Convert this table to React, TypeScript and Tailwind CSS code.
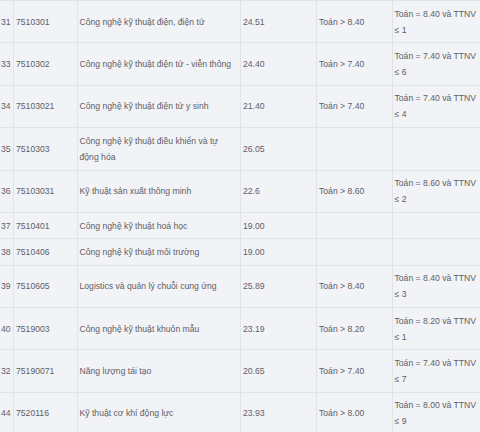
import React from "react";

type Row = { n: string; code: string; name: string; score: string; c1: string; c2: string };

const rows: Row[] = [
  { n: "31", code: "7510301", name: "Công nghệ kỹ thuật điện, điện tử", score: "24.51", c1: "Toán > 8.40", c2: "Toán = 8.40 và TTNV ≤ 1" },
  { n: "33", code: "7510302", name: "Công nghệ kỹ thuật điện tử - viễn thông", score: "24.40", c1: "Toán > 7.40", c2: "Toán = 7.40 và TTNV ≤ 6" },
  { n: "34", code: "75103021", name: "Công nghệ kỹ thuật điện tử y sinh", score: "21.40", c1: "Toán > 7.40", c2: "Toán = 7.40 và TTNV ≤ 4" },
  { n: "35", code: "7510303", name: "Công nghệ kỹ thuật điều khiển và tự động hóa", score: "26.05", c1: "", c2: "" },
  { n: "36", code: "75103031", name: "Kỹ thuật sản xuất thông minh", score: "22.6", c1: "Toán > 8.60", c2: "Toán = 8.60 và TTNV ≤ 2" },
  { n: "37", code: "7510401", name: "Công nghệ kỹ thuật hoá học", score: "19.00", c1: "", c2: "" },
  { n: "38", code: "7510406", name: "Công nghệ kỹ thuật môi trường", score: "19.00", c1: "", c2: "" },
  { n: "39", code: "7510605", name: "Logistics và quản lý chuỗi cung ứng", score: "25.89", c1: "Toán > 8.40", c2: "Toán = 8.40 và TTNV ≤ 3" },
  { n: "40", code: "7519003", name: "Công nghệ kỹ thuật khuôn mẫu", score: "23.19", c1: "Toán > 8.20", c2: "Toán = 8.20 và TTNV ≤ 1" },
  { n: "32", code: "75190071", name: "Năng lượng tái tạo", score: "20.65", c1: "Toán > 7.40", c2: "Toán = 7.40 và TTNV ≤ 7" },
  { n: "44", code: "7520116", name: "Kỹ thuật cơ khí động lực", score: "23.93", c1: "Toán > 8.00", c2: "Toán = 8.00 và TTNV ≤ 9" },
];

const cell = "flex items-center border-r border-b border-[#e2e3e9] py-[4.7px]";

export default function App() {
  return (
    <div
      className="w-[480px] h-[432px] overflow-hidden bg-[#f2f3f7] text-[#5d6066] text-[8.65px] leading-[16px]"
      style={{ fontFamily: '"Liberation Sans", Arial, sans-serif' }}
    >
      <div className="grid grid-cols-[14px_64px_163px_76px_76px_91px] w-[484px] border-t border-[#e2e3e9]">
        {rows.map((r) => (
          <React.Fragment key={r.code}>
            <div className={`${cell} pl-[1px]`}>{r.n}</div>
            <div className={`${cell} pl-[2px]`}>{r.code}</div>
            <div className={`${cell} pl-[1.5px] pr-[2px]`}>{r.name}</div>
            <div className={`${cell} pl-[2px]`}>{r.score}</div>
            <div className={`${cell} pl-[2px]`}>{r.c1}</div>
            <div className={`${cell} pl-[1.5px] pr-[2px]`}>{r.c2}</div>
          </React.Fragment>
        ))}
      </div>
    </div>
  );
}
